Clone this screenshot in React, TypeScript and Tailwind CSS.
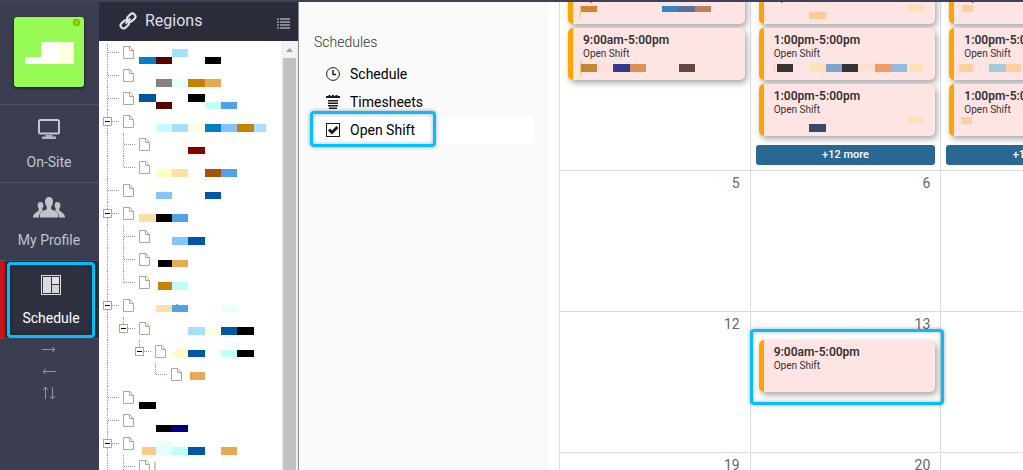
import type { ReactNode } from 'react'

// x, y, width, height, colour
type Block = [number, number, number, number, string]

type TreeRow = {
  level: number
  toggle?: boolean
  last?: boolean
  blocks: Block[]
}

type Shift = { time: string; blocks: Block[] }

const treeRows: TreeRow[] = [
  { level: 0, blocks: [[73, 8, 16, 8, '#a5e0ff'], [40, 16, 17, 7, '#0080c8'], [57, 16, 16, 7, '#580000'], [106, 16, 16, 7, '#000000']] },
  { level: 0, blocks: [[57, 15, 16, 8, '#858285'], [73, 15, 16, 8, '#e6ffff'], [89, 15, 17, 8, '#c88200'], [106, 15, 16, 8, '#e8a854']] },
  { level: 0, blocks: [[40, 7, 17, 8, '#0055a5'], [89, 7, 17, 8, '#000000'], [57, 15, 16, 7, '#580000'], [106, 15, 16, 7, '#c0ffff'], [122, 15, 16, 7, '#50a2e8']] },
  { level: 0, toggle: true, blocks: [[57, 14, 16, 8, '#c4ffff'], [73, 14, 16, 8, '#a5e0ff'], [89, 14, 17, 8, '#ffffe4'], [106, 14, 16, 8, '#0080c8'], [122, 14, 16, 8, '#85c4ff'], [138, 14, 17, 8, '#c88200'], [155, 14, 12, 8, '#a5e0ff']] },
  { level: 1, blocks: [[89, 14, 17, 7, '#850000']] },
  { level: 1, last: true, blocks: [[57, 13, 16, 8, '#ffffc4'], [73, 13, 16, 8, '#ffe0a2'], [106, 13, 16, 8, '#a55500'], [122, 13, 16, 8, '#50a2e8']] },
  { level: 0, blocks: [[57, 13, 16, 7, '#85c4ff'], [106, 13, 16, 7, '#0055a5']] },
  { level: 0, toggle: true, blocks: [[40, 12, 17, 8, '#ffe0a2'], [57, 12, 16, 8, '#000000'], [73, 12, 16, 8, '#50a2e8']] },
  { level: 1, blocks: [[73, 12, 16, 8, '#85c4ff'], [89, 12, 17, 8, '#0055a5']] },
  { level: 1, blocks: [[59, 12, 14, 7, '#000000'], [73, 12, 16, 7, '#e8a854']] },
  { level: 1, last: true, blocks: [[59, 11, 14, 8, '#c88200'], [73, 11, 16, 8, '#c0ffff']] },
  { level: 0, toggle: true, blocks: [[57, 11, 16, 7, '#ffe0a2'], [73, 11, 16, 7, '#50a2e8'], [77, 10, 2, 1, '#b0b0b0'], [122, 11, 16, 7, '#e6ffff']] },
  { level: 1, toggle: true, last: true, blocks: [[89, 10, 17, 8, '#a5e0ff'], [106, 10, 16, 8, '#ffffe4'], [122, 10, 16, 8, '#0055a5'], [138, 10, 17, 8, '#000000']] },
  { level: 2, toggle: true, last: true, blocks: [[75, 10, 14, 7, '#ffffc4'], [89, 10, 17, 7, '#0055a5'], [122, 10, 16, 7, '#c0ffff'], [138, 10, 17, 7, '#000000']] },
  { level: 3, last: true, blocks: [[91, 9, 15, 8, '#e8a854']] },
  { level: 0, blocks: [[40, 16, 17, 7, '#000000']] },
  { level: 0, blocks: [[57, 16, 16, 7, '#000000'], [73, 16, 16, 7, '#000085']] },
  { level: 0, toggle: true, blocks: [[43, 15, 14, 8, '#ffc885'], [57, 9, 16, 14, '#e6ffff'], [73, 15, 16, 8, '#c0ffff'], [89, 15, 17, 8, '#0055a5'], [122, 15, 16, 8, '#e8a854']] },
  { level: 1, blocks: [[55, 7, 2, 9, '#c8c8ba']] },
]

const sunday: Shift[] = [
  { time: '9:00am-5:00pm', blocks: [[12, 34, 1, 12, '#f5c880'], [13, 34, 16, 6, '#d28432'], [94, 34, 16, 6, '#3585be'], [110, 34, 17, 6, '#58709a'], [127, 34, 16, 6, '#c08060']] },
  { time: '9:00am-5:00pm', blocks: [[12, 33, 1, 16, '#f5c880'], [13, 36, 16, 8, '#c48735'], [29, 36, 16, 8, '#ffe0dc'], [45, 36, 17, 8, '#353b8c'], [62, 36, 16, 8, '#d89255'], [111, 36, 16, 8, '#64483c']] },
]

const monday: Shift[] = [
  { time: '1:00pm-5:00pm', blocks: [[148, 33, 17, 7, '#ffe2b8'], [50, 40, 17, 7, '#ffcb96']] },
  { time: '1:00pm-5:00pm', blocks: [[15, 36, 1, 7, '#ffcbb4'], [18, 36, 16, 8, '#3a3333'], [50, 36, 17, 8, '#ffe2b8'], [67, 36, 16, 8, '#7fa5cf'], [83, 36, 16, 8, '#333333'], [99, 36, 17, 8, '#ffdfd2'], [116, 36, 16, 8, '#eca068'], [132, 36, 16, 8, '#90bbe5'], [148, 36, 16, 8, '#ffe2b8']] },
  { time: '1:00pm-5:00pm', blocks: [[50, 40, 17, 8, '#384a6c'], [148, 33, 16, 7, '#ffe2b8']] },
]

const tuesday: Shift[] = [
  { time: '1:00pm-5:00pm', blocks: [[13, 33, 11, 7, '#ffcf9f']] },
  { time: '1:00pm-5:00pm', blocks: [[10, 36, 14, 8, '#ffcf9f'], [40, 36, 17, 8, '#a5cbd8'], [57, 36, 15, 8, '#ffcf9f']] },
  { time: '1:00pm-5:00pm', blocks: [[12, 33, 11, 7, '#ffcf9f']] },
]

function Blocks({ blocks, className }: { blocks: Block[]; className: string }) {
  return (
    <svg className={className} shapeRendering="crispEdges" aria-hidden="true">
      {blocks.map(([x, y, w, h, fill], i) => (
        <rect key={i} x={x} y={y} width={w} height={h} fill={fill} />
      ))}
    </svg>
  )
}

function Highlight({ className }: { className: string }) {
  return (
    <span
      className={`pointer-events-none absolute rounded-[4px] border-3 border-[#00bfff] shadow-[0_0_4px_rgba(0,0,0,0.35),inset_0_0_4px_rgba(0,0,0,0.3)] ${className}`}
    />
  )
}

/* Icons */

function MonitorIcon() {
  return (
    <svg width="22" height="20" viewBox="0 0 22 20" aria-hidden="true">
      <rect x="1" y="1" width="20" height="13.5" rx="1.5" fill="none" stroke="#c6c7cb" strokeWidth="2" />
      <path d="M7.5 16h7v1.5H18V20H4v-2.5h3.5z" fill="#b4b5ba" />
    </svg>
  )
}

function PeopleIcon() {
  return (
    <svg width="32" height="21" viewBox="0 0 32 21" fill="#c2c3c7" aria-hidden="true">
      <path d="M16 0c2.600 0 4 1.800 4 4.500 0 2.200-.8 4-1.800 5.200v2.200c1 1.300 6.300 2 6.800 5.300V20.500H7v-3.300c.5-3.300 5.800-4 6.800-5.300V9.700C12.800 8.500 12 6.700 12 4.500 12 1.800 13.400 0 16 0z" />
      <path d="M7.500 5c1.600 0 2.900 1.200 2.900 3.300 0 1.500-.5 2.700-1.200 3.500v1.200l1.300.8C7.500 15 6.200 16.500 6 20.500H0c0-4 3.500-4.700 5.800-7.200v-1.500C5.100 11 4.600 9.800 4.600 8.300 4.600 6.200 5.900 5 7.500 5z" />
      <path d="M24.500 5c-1.600 0-2.900 1.200-2.900 3.300 0 1.500.5 2.700 1.200 3.500v1.200l-1.300.8c3 1.200 4.300 2.700 4.500 6.700h6c0-4-3.500-4.700-5.800-7.200v-1.500c.7-.8 1.200-2 1.200-3.500C27.400 6.200 26.100 5 24.500 5z" />
    </svg>
  )
}

function LayoutIcon() {
  return (
    <svg width="20" height="20" viewBox="0 0 20 20" shapeRendering="crispEdges" aria-hidden="true">
      <rect width="20" height="20" fill="#dedede" />
      <rect x="1" y="1" width="18" height="18" fill="#33363f" />
      <rect x="2" y="2" width="8" height="16" fill="#dcdcdc" />
      <rect x="11" y="2" width="7" height="7" fill="#e4e4e4" />
      <rect x="11" y="10" width="7" height="8" fill="#d4d4d4" />
    </svg>
  )
}

function ChainIcon() {
  return (
    <svg width="18" height="18" viewBox="0 0 18 18" fill="none" stroke="#e2e2e4" strokeWidth="2.200" aria-hidden="true">
      <rect x="7.800" y="2.600" width="9" height="6" rx="3" transform="rotate(-45 12.300 5.600)" />
      <rect x="1.200" y="9.400" width="9" height="6" rx="3" transform="rotate(-45 5.700 12.400)" />
      <path d="M6.500 11.500l5-5" />
    </svg>
  )
}

function ListIcon() {
  return (
    <svg width="13" height="11" viewBox="0 0 13 11" fill="#85868e" shapeRendering="crispEdges" aria-hidden="true">
      {[0, 3, 6, 9].map((y) => (
        <g key={y}>
          <rect x="0" y={y} width="2" height="2" />
          <rect x="3" y={y} width="10" height="2" />
        </g>
      ))}
    </svg>
  )
}

function DocIcon() {
  return (
    <svg width="11" height="13" viewBox="0 0 11 13" fill="none" stroke="#aeab98" aria-hidden="true" className="shrink-0">
      <path d="M.5.500h6.500l3.500 4v8H.5z" />
      <path d="M6.500.500v4h4" />
    </svg>
  )
}

function ClockIcon() {
  return (
    <svg width="14" height="14" viewBox="0 0 14 14" fill="none" stroke="#1c1c1c" aria-hidden="true">
      <circle cx="7" cy="7" r="6.400" />
      <path d="M7 3v4.500h3" strokeWidth="1.400" />
    </svg>
  )
}

function SheetIcon() {
  return (
    <svg width="14" height="14" viewBox="0 0 14 14" fill="#1c1c1c" aria-hidden="true">
      <path d="M2.500 0h2v1h1.500V0h2v1h1.500V0h2v1H14v2H0V1h2.500z" />
      <path d="M2 5h10v1.500H2zM2 7.500h10V9H2zM2 10h10v1.500H2zM3 12.500h8V14H3z" />
    </svg>
  )
}

function CheckIcon() {
  return (
    <svg width="14" height="14" viewBox="0 0 14 14" fill="none" stroke="#1c1c1c" aria-hidden="true">
      <rect x=".5" y=".5" width="13" height="13" />
      <path d="M3 6.500l3 3 5.500-5.500" strokeWidth="3" />
    </svg>
  )
}

/* Left navigation */

function NavItem({ icon, label, active }: { icon: ReactNode; label: string; active?: boolean }) {
  return (
    <a
      href="#"
      aria-current={active ? 'page' : undefined}
      className={`relative flex h-[78px] flex-col items-center justify-between border-b border-[#50536a] pt-[13px] pb-[9px] text-sm
        ${active ? 'border-l-5 border-l-[#c4161c] bg-[#2d303e] pr-[2px] text-white' : 'pr-px text-[#c2c3c9]'}`}
    >
      <span className="flex h-[22px] items-center">{icon}</span>
      <span className="leading-[22px]">{label}</span>
      {active && <Highlight className="top-px bottom-0 left-[2px] right-1" />}
    </a>
  )
}

function Sidebar() {
  return (
    <nav className="flex w-[99px] shrink-0 flex-col bg-[#3b3e50]">
      <div className="flex h-[103px] justify-center border-b border-[#50536a] pt-[15px] pr-px">
        <div className="relative h-[70px] w-[70px] rounded-[3px] bg-[#97fb56] shadow-[0_1px_3px_rgba(0,0,0,0.7)]">
          <svg width="70" height="70" viewBox="0 0 70 70" role="img" aria-label="Company logo">
            <path d="M11 40h16V25h17v22H11z" fill="#ffffff" />
            <path d="M44 25h16v22H44z" fill="#ffffe4" />
            <circle cx="62.500" cy="5.500" r="3.200" fill="#93d500" stroke="#6fa818" />
          </svg>
        </div>
      </div>
      <NavItem icon={<MonitorIcon />} label="On-Site" />
      <NavItem icon={<PeopleIcon />} label="My Profile" />
      <NavItem icon={<LayoutIcon />} label="Schedule" active />
      <div className="flex flex-col items-center gap-2 pt-[3px] pr-px">
        <button aria-label="Expand right" className="h-[14px]">
          <svg width="14" height="14" viewBox="0 0 14 14" fill="none" stroke="#92939b">
            <path d="M0 7.500h13M10 5l3 2.500-3 2.500" />
          </svg>
        </button>
        <button aria-label="Expand left" className="h-[14px]">
          <svg width="14" height="14" viewBox="0 0 14 14" fill="none" stroke="#92939b">
            <path d="M14 7.500H1M4 5L1 7.500l3 2.500" />
          </svg>
        </button>
        <button aria-label="Swap order" className="h-[14px]">
          <svg width="14" height="14" viewBox="0 0 14 14" fill="none" stroke="#92939b">
            <path d="M3.500 13V1M1 4l2.500-3L6 4M10.500 1v12M8 10l2.500 3L13 10" />
          </svg>
        </button>
      </div>
    </nav>
  )
}

/* Regions tree */

function TreeItem({ row, index }: { row: TreeRow; index: number }) {
  return (
    <li className="relative flex h-[23px] items-center">
      {Array.from({ length: row.level }, (_, i) => (
        <span key={i} className="h-full w-4 shrink-0 pl-2">
          {i === 0 && <span className="block h-full border-l border-dotted border-[#999]" />}
        </span>
      ))}
      <span className="relative h-full w-6 shrink-0">
        <svg width="24" height="23" fill="none" stroke="#999" strokeDasharray="1 1" shapeRendering="crispEdges" aria-hidden="true">
          <path d={`M8.500 ${index === 0 ? 3 : 0}V${row.last ? 12 : 23}M9 11.500h11`} />
        </svg>
        {row.toggle && (
          <button aria-label="Collapse" className="absolute top-[7px] left-1 flex h-[9px] w-[9px] items-center justify-center border border-[#aeab98] bg-white">
            <span className="h-px w-[5px] bg-black" />
          </button>
        )}
      </span>
      <DocIcon />
      <Blocks blocks={row.blocks} className="pointer-events-none absolute inset-0 h-full w-full" />
    </li>
  )
}

function RegionsPanel() {
  return (
    <section className="flex w-[200px] shrink-0 flex-col border-r border-[#8c8c8c] bg-white">
      <header className="flex h-[39px] shrink-0 items-center bg-[#2a2c3b] pr-2 pb-px pl-5">
        <ChainIcon />
        <h2 className="ml-2 flex-1 text-base text-[#dfdfe2]">Regions</h2>
        <button aria-label="Region list" className="mt-1">
          <ListIcon />
        </button>
      </header>
      <div className="flex min-h-0 flex-1">
        <ul className="min-w-0 flex-1 overflow-hidden">
          {treeRows.map((row, i) => (
            <TreeItem key={i} row={row} index={i} />
          ))}
        </ul>
        {/* Scrollbar */}
        <div className="flex w-[17px] flex-col items-center bg-[#f1f1f1]">
          <svg width="17" height="17" viewBox="0 0 17 17" className="shrink-0" aria-hidden="true">
            <path d="M5 11l3.500-4 3.500 4z" fill="#a0a0a0" />
          </svg>
          <span className="w-[13px] flex-1 bg-[#c1c1c1]" />
        </div>
      </div>
    </section>
  )
}

/* Schedules menu */

function MenuLink({ icon, label, active }: { icon: ReactNode; label: string; active?: boolean }) {
  return (
    <li className="relative">
      <a href="#" className={`flex h-7 items-center gap-[10px] rounded-md pl-3 text-sm text-black ${active ? 'bg-white' : ''}`}>
        {icon}
        {label}
      </a>
      {active && <Highlight className="-top-[5px] -left-1 h-9 w-[126px]" />}
    </li>
  )
}

function SchedulesMenu() {
  return (
    <aside className="w-[250px] shrink-0 bg-[#fafafa] pt-[30px] pr-[15px] pl-[15px]">
      <h3 className="mb-2 text-sm font-light text-[#333]">Schedules</h3>
      <ul>
        <MenuLink icon={<ClockIcon />} label="Schedule" />
        <MenuLink icon={<SheetIcon />} label="Timesheets" />
        <MenuLink icon={<CheckIcon />} label="Open Shift" active />
      </ul>
    </aside>
  )
}

/* Calendar */

function ShiftCard({ shift, highlighted }: { shift: Shift; highlighted?: boolean }) {
  return (
    <div className="relative mr-[5px] ml-2 h-[52px] rounded-[5px] border-l-5 border-[#ffa500] bg-[#ffe4e4] pt-1 pl-[10px] text-[#333] shadow-[2px_3px_6px_rgba(0,0,0,0.35)]">
      <p className="text-xs leading-4 font-semibold">{shift.time}</p>
      <p className="text-[10px] leading-3">Open Shift</p>
      <Blocks blocks={shift.blocks} className="absolute top-0 -left-[5px] h-full w-[177px]" />
      {highlighted && <Highlight className="-top-[11px] -right-[9px] -bottom-[13px] -left-[14px]" />}
    </div>
  )
}

function MoreButton() {
  return (
    <button className="mt-[5px] mr-[5px] ml-[5px] h-5 rounded-[3px] bg-[#2a6894] text-[11px] font-medium text-white">
      +12 more
    </button>
  )
}

function Day({ date, children }: { date?: number; children?: ReactNode }) {
  return (
    <div className="flex min-w-0 flex-col gap-1 border-b border-l border-[#ddd]">
      {date && <span className="h-6 pr-[10px] text-right text-sm leading-6 text-[#666]">{date}</span>}
      {children}
    </div>
  )
}

function Calendar() {
  return (
    <main className="min-w-0 flex-1 overflow-hidden bg-white pl-[10px]">
      {/* scrolled so that the first week is partly hidden */}
      <div className="-mt-[30px] grid min-w-[572px] auto-rows-[141px] grid-cols-3 grid-rows-[199px]">
        <Day>
          {sunday.map((shift, i) => <ShiftCard key={i} shift={shift} />)}
        </Day>
        <Day>
          {monday.map((shift, i) => <ShiftCard key={i} shift={shift} />)}
          <MoreButton />
        </Day>
        <Day>
          {tuesday.map((shift, i) => <ShiftCard key={i} shift={shift} />)}
          <MoreButton />
        </Day>
        <Day date={5} />
        <Day date={6} />
        <Day date={7} />
        <Day date={12} />
        <Day date={13}>
          <ShiftCard shift={{ time: '9:00am-5:00pm', blocks: [] }} highlighted />
        </Day>
        <Day date={14} />
        <Day date={19} />
        <Day date={20} />
        <Day date={21} />
      </div>
    </main>
  )
}

export default function App() {
  return (
    <div className="flex h-screen flex-col overflow-hidden border-t-2 border-[#3f4157] bg-white font-[Roboto,sans-serif]">
      <div className="flex min-h-0 flex-1">
        <Sidebar />
        <RegionsPanel />
        <SchedulesMenu />
        <Calendar />
      </div>
    </div>
  )
}
